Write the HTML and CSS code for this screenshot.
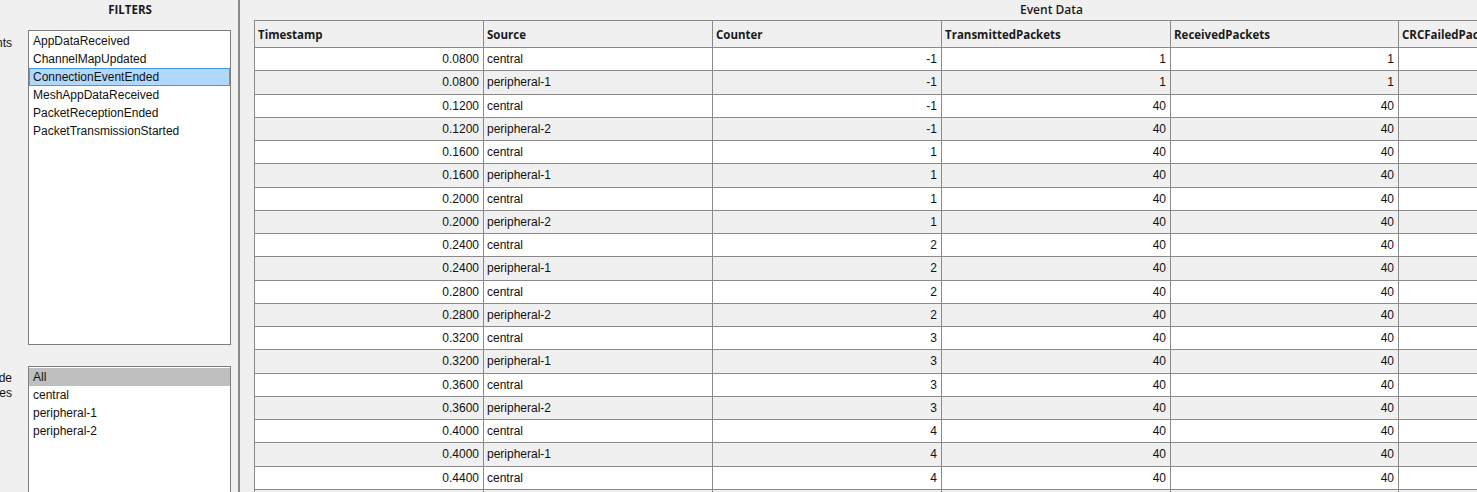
FILE: index.html
```html
<!DOCTYPE html>
<html>
<head>
<meta charset="utf-8">
<link rel="stylesheet" href="styles.css">
</head>
<body>
<div class="app">
  <aside class="filters">
    <div class="panel-title">FILTERS</div>
    <div class="filter-group events">
      <div class="label"><span>Events</span></div>
      <ul class="listbox tall">
        <li>AppDataReceived</li>
        <li>ChannelMapUpdated</li>
        <li class="selected">ConnectionEventEnded</li>
        <li>MeshAppDataReceived</li>
        <li>PacketReceptionEnded</li>
        <li>PacketTransmissionStarted</li>
      </ul>
    </div>
    <div class="filter-group nodes">
      <div class="label"><span>Node<br>Names</span></div>
      <ul class="listbox short">
        <li class="active">All</li>
        <li>central</li>
        <li>peripheral-1</li>
        <li>peripheral-2</li>
      </ul>
    </div>
  </aside>
  <div class="divider"></div>
  <main class="data">
    <div class="data-title">Event Data</div>
    <div class="grid">
      <div class="row head">
        <div class="cell">Timestamp</div>
        <div class="cell">Source</div>
        <div class="cell">Counter</div>
        <div class="cell">TransmittedPackets</div>
        <div class="cell">ReceivedPackets</div>
        <div class="cell">CRCFailedPackets</div>
      </div>
      <div class="row"><div class="cell num">0.0800</div><div class="cell">central</div><div class="cell num">-1</div><div class="cell num">1</div><div class="cell num">1</div><div class="cell num">0</div></div>
      <div class="row"><div class="cell num">0.0800</div><div class="cell">peripheral-1</div><div class="cell num">-1</div><div class="cell num">1</div><div class="cell num">1</div><div class="cell num">0</div></div>
      <div class="row"><div class="cell num">0.1200</div><div class="cell">central</div><div class="cell num">-1</div><div class="cell num">40</div><div class="cell num">40</div><div class="cell num">0</div></div>
      <div class="row"><div class="cell num">0.1200</div><div class="cell">peripheral-2</div><div class="cell num">-1</div><div class="cell num">40</div><div class="cell num">40</div><div class="cell num">0</div></div>
      <div class="row"><div class="cell num">0.1600</div><div class="cell">central</div><div class="cell num">1</div><div class="cell num">40</div><div class="cell num">40</div><div class="cell num">0</div></div>
      <div class="row"><div class="cell num">0.1600</div><div class="cell">peripheral-1</div><div class="cell num">1</div><div class="cell num">40</div><div class="cell num">40</div><div class="cell num">0</div></div>
      <div class="row"><div class="cell num">0.2000</div><div class="cell">central</div><div class="cell num">1</div><div class="cell num">40</div><div class="cell num">40</div><div class="cell num">0</div></div>
      <div class="row"><div class="cell num">0.2000</div><div class="cell">peripheral-2</div><div class="cell num">1</div><div class="cell num">40</div><div class="cell num">40</div><div class="cell num">0</div></div>
      <div class="row"><div class="cell num">0.2400</div><div class="cell">central</div><div class="cell num">2</div><div class="cell num">40</div><div class="cell num">40</div><div class="cell num">0</div></div>
      <div class="row"><div class="cell num">0.2400</div><div class="cell">peripheral-1</div><div class="cell num">2</div><div class="cell num">40</div><div class="cell num">40</div><div class="cell num">0</div></div>
      <div class="row"><div class="cell num">0.2800</div><div class="cell">central</div><div class="cell num">2</div><div class="cell num">40</div><div class="cell num">40</div><div class="cell num">0</div></div>
      <div class="row"><div class="cell num">0.2800</div><div class="cell">peripheral-2</div><div class="cell num">2</div><div class="cell num">40</div><div class="cell num">40</div><div class="cell num">0</div></div>
      <div class="row"><div class="cell num">0.3200</div><div class="cell">central</div><div class="cell num">3</div><div class="cell num">40</div><div class="cell num">40</div><div class="cell num">0</div></div>
      <div class="row"><div class="cell num">0.3200</div><div class="cell">peripheral-1</div><div class="cell num">3</div><div class="cell num">40</div><div class="cell num">40</div><div class="cell num">0</div></div>
      <div class="row"><div class="cell num">0.3600</div><div class="cell">central</div><div class="cell num">3</div><div class="cell num">40</div><div class="cell num">40</div><div class="cell num">0</div></div>
      <div class="row"><div class="cell num">0.3600</div><div class="cell">peripheral-2</div><div class="cell num">3</div><div class="cell num">40</div><div class="cell num">40</div><div class="cell num">0</div></div>
      <div class="row"><div class="cell num">0.4000</div><div class="cell">central</div><div class="cell num">4</div><div class="cell num">40</div><div class="cell num">40</div><div class="cell num">0</div></div>
      <div class="row"><div class="cell num">0.4000</div><div class="cell">peripheral-1</div><div class="cell num">4</div><div class="cell num">40</div><div class="cell num">40</div><div class="cell num">0</div></div>
      <div class="row"><div class="cell num">0.4400</div><div class="cell">central</div><div class="cell num">4</div><div class="cell num">40</div><div class="cell num">40</div><div class="cell num">0</div></div>
      <div class="row"><div class="cell num">0.4400</div><div class="cell">peripheral-2</div><div class="cell num">4</div><div class="cell num">40</div><div class="cell num">40</div><div class="cell num">0</div></div>
    </div>
  </main>
</div>
</body>
</html>
```
FILE: styles.css
```css
html, body {
  margin: 0;
  padding: 0;
  background: #f0f0f0;
  overflow: hidden;
}

.app {
  display: flex;
  width: 1477px;
  height: 492px;
  overflow: hidden;
  font-family: "Liberation Sans", Arial, sans-serif;
  font-size: 12px;
  color: #111;
}

/* ---------- left filters panel ---------- */
.filters {
  width: 238px;
  flex: none;
  display: flex;
  flex-direction: column;
}

.panel-title {
  height: 20px;
  line-height: 19px;
  padding-left: 22px;
  text-align: center;
  font-family: "Open Sans", "Noto Sans", sans-serif;
  font-weight: 700;
  font-size: 11.5px;
  color: #1a1a1a;
}

.filter-group {
  display: flex;
}

.events {
  margin-top: 11px;
}

.nodes {
  margin-top: 21px;
}

.label {
  width: 28px;
  flex: none;
  overflow: hidden;
  display: flex;
  justify-content: flex-end;
}

.label span {
  flex: none;
  padding-right: 16px;
  text-align: right;
  line-height: 15px;
  white-space: nowrap;
}

.events .label span {
  padding-top: 6px;
}

.nodes .label span {
  padding-top: 5px;
}

.listbox {
  list-style: none;
  margin: 0;
  padding: 1px 0 0;
  width: 201px;
  background: #fff;
  border: 1px solid #7d7d7d;
}

.listbox.tall {
  height: 312px;
}

.listbox.short {
  height: 200px;
}

.listbox li {
  height: 18px;
  line-height: 18px;
  padding-left: 4px;
  box-sizing: border-box;
  white-space: nowrap;
}

.listbox li.selected {
  background: #b0d8fb;
  border: 1px solid #3e9ae6;
  line-height: 16px;
  padding-left: 3px;
}

.listbox li.active {
  background: #bfbfbf;
}

/* ---------- divider ---------- */
.divider {
  width: 2px;
  flex: none;
  background: #8a8a8a;
}

/* ---------- right data panel ---------- */
.data {
  flex: 1;
  min-width: 0;
  overflow: hidden;
}

.data-title {
  height: 20px;
  line-height: 19px;
  padding-left: 780px;
  font-family: "Open Sans", "Noto Sans", sans-serif;
  font-weight: 600;
  font-size: 12px;
  color: #1a1a1a;
  white-space: nowrap;
}

.grid {
  margin-left: 14px;
  width: 1400px;
  border-top: 1px solid #8a8a8a;
  border-left: 1px solid #8a8a8a;
}

.row {
  display: grid;
  grid-template-columns: 229px 229px 229px 229px 228px 229px;
  height: 23.25px;
  box-sizing: border-box;
  border-bottom: 1px solid #8a8a8a;
  background: #fff;
}

.row:nth-child(odd) {
  background: #f0f0f0;
}

.row.head {
  height: 27px;
  background: #f0f0f0;
}

.cell {
  border-right: 1px solid #8a8a8a;
  padding: 0 4px 0 3px;
  display: flex;
  align-items: center;
  white-space: nowrap;
  overflow: hidden;
}

.cell.num {
  justify-content: flex-end;
}

.head .cell {
  font-family: "Open Sans", "Noto Sans", sans-serif;
  font-weight: 700;
  font-size: 11.5px;
  padding-top: 1px;
  color: #1a1a1a;
}
```
